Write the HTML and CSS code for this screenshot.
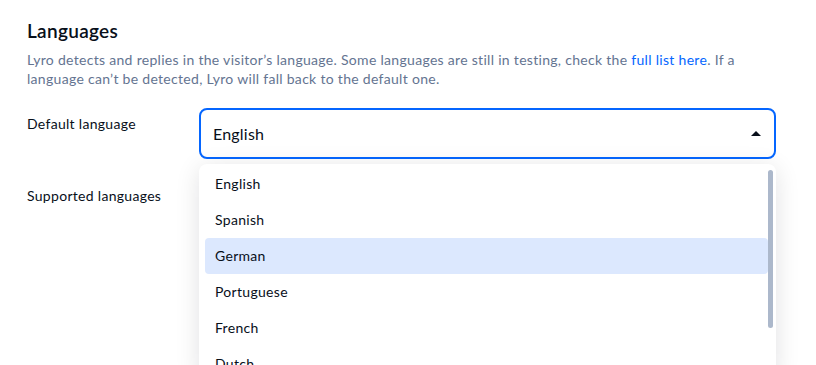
FILE: index.html
```html
<!DOCTYPE html>
<html lang="en">

<head>
    <meta charset="UTF-8">
    <title>Languages</title>
    <link rel="stylesheet" href="styles.css">
</head>

<body>
    <div class="section">
        <h2 class="title">Languages</h2>
        <p class="desc">Lyro detects and replies in the visitor’s language. Some languages are still in testing, check the <a href="#">full list here</a>. If a language can’t be detected, Lyro will fall back to the default one.</p>

        <div class="row">
            <div class="label">Default language</div>
            <div class="field">
                <div class="select">
                    <span>English</span>
                    <i class="caret"></i>
                </div>
                <div class="dropdown">
                    <ul class="options">
                        <li>English</li>
                        <li>Spanish</li>
                        <li class="active">German</li>
                        <li>Portuguese</li>
                        <li>French</li>
                        <li>Dutch</li>
                    </ul>
                    <div class="scroll"></div>
                </div>
            </div>
        </div>

        <div class="row second">
            <div class="label">Supported languages</div>
        </div>
    </div>
</body>

</html>
```

FILE: styles.css
```css
* {
    margin: 0;
    padding: 0;
    box-sizing: border-box;
}

html,
body {
    height: 100%;
    overflow: hidden;
    background: #fff;
}

body {
    font-family: "Lato", "Open Sans", sans-serif;
    color: #080f1a;
    letter-spacing: 0.3px;
}

.section {
    padding: 20px 40px 0 27px;
}

.title {
    font-size: 19px;
    font-weight: 600;
    line-height: 22px;
    letter-spacing: 0.3px;
}

.desc {
    margin-top: 8px;
    width: 730px;
    font-size: 14px;
    line-height: 19px;
    color: #647491;
}

.desc a {
    color: #0566ff;
    text-decoration: none;
}

.row {
    display: grid;
    grid-template-columns: 172px 577px;
    margin-top: 20px;
}

.row.second {
    margin-top: 21px;
}

.label {
    font-size: 14px;
    line-height: 20px;
    padding-top: 6px;
}

.field {
    position: relative;
}

.select {
    height: 51px;
    border: 2px solid #0566ff;
    border-radius: 8px;
    display: flex;
    align-items: center;
    justify-content: space-between;
    padding: 0 13px 0 12px;
    font-size: 16px;
    letter-spacing: 0.2px;
}

.caret {
    width: 0;
    height: 0;
    border-left: 5px solid transparent;
    border-right: 5px solid transparent;
    border-bottom: 5px solid #080f1a;
}

.dropdown {
    position: absolute;
    top: 56px;
    left: 0;
    width: 577px;
    height: 215px;
    background: #fff;
    border-radius: 8px;
    box-shadow: 0 4px 24px rgba(8, 15, 26, 0.12);
    padding: 2px 8px 0 6px;
    overflow: hidden;
    z-index: 5;
}

.options {
    list-style: none;
}

.options li {
    height: 36px;
    line-height: 35px;
    padding-left: 10px;
    font-size: 14px;
    border-radius: 4px;
}

.options li.active {
    background: #dce8fe;
}

.scroll {
    position: absolute;
    top: 6px;
    right: 3px;
    width: 5px;
    height: 158px;
    border-radius: 3px;
    background: #acb8cb;
}
```
